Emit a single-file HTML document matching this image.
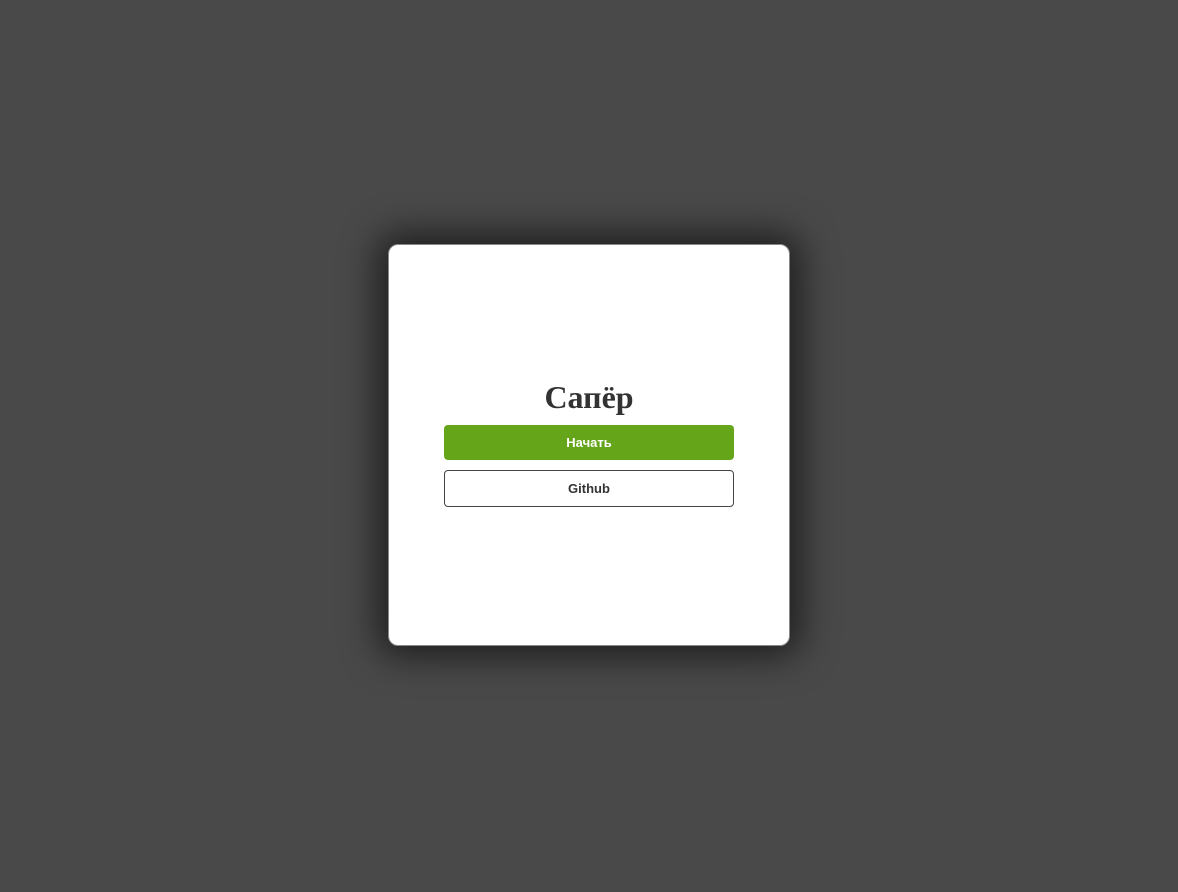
<!DOCTYPE html>
<html><head><meta charset="utf-8"><style>
html,body{margin:0;padding:0;width:1178px;height:892px;background:#494949;overflow:hidden}
.card{position:absolute;left:388px;top:244px;width:400px;height:400px;background:#fff;border:1px solid #888;border-radius:10px;box-shadow:0 0 36px 10px rgba(0,0,0,.6)}
h1{position:absolute;left:0;right:0;top:377px;margin:0;text-align:center;font:bold 32px/40px "Liberation Serif",serif;color:#333}
.b{position:absolute;left:444px;width:290px;box-sizing:border-box;border-radius:4px;text-align:center;font:bold 13px "Liberation Sans",sans-serif}
.g{top:425px;height:35px;line-height:35px;background:#64a519;color:#fff}
.o{top:470px;height:37px;line-height:35px;border:1px solid #444;color:#333;background:#fff}
</style></head><body>
<div class="card"></div>
<h1>Сапёр</h1>
<div class="b g">Начать</div>
<div class="b o">Github</div>
</body></html>
